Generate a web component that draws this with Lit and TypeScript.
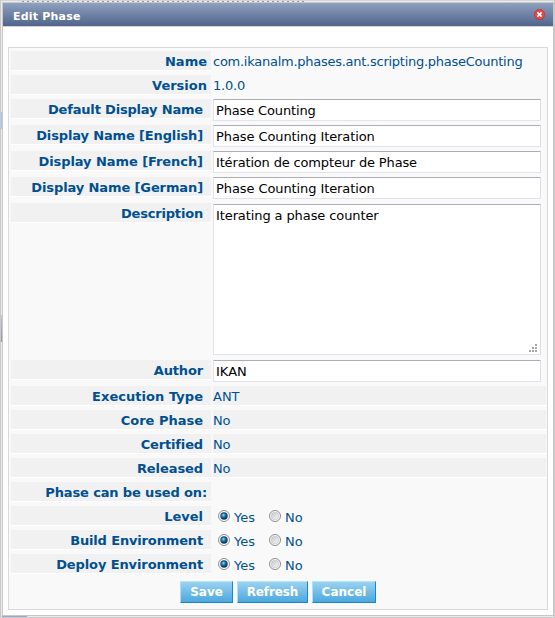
import { LitElement, html, css, svg, nothing } from "lit";
import { customElement, property } from "lit/decorators.js";

type Kind = "text" | "input" | "area" | "shaded" | "radio" | "heading";

interface Field {
  label: string;
  kind: Kind;
  value?: string;
  wide?: boolean;
  /** letter spacing of the label and of the value, px */
  ls?: number;
  vs?: number;
}

const FIELDS: Field[] = [
  { label: "Name", kind: "text", value: "com.ikanalm.phases.ant.scripting.phaseCounting", wide: true, vs: -0.26 },
  { label: "Version", kind: "text", value: "1.0.0", wide: true, vs: -0.2 },
  { label: "Default Display Name", kind: "input", value: "Phase Counting", ls: -0.18, vs: -0.14 },
  { label: "Display Name [English]", kind: "input", value: "Phase Counting Iteration", ls: -0.14, vs: -0.09 },
  { label: "Display Name [French]", kind: "input", value: "Itération de compteur de Phase", ls: -0.07, vs: -0.16 },
  { label: "Display Name [German]", kind: "input", value: "Phase Counting Iteration", ls: -0.11, vs: -0.09 },
  { label: "Description", kind: "area", value: "Iterating a phase counter", ls: -0.18, vs: -0.1 },
  { label: "Author", kind: "input", value: "IKAN", ls: -0.15 },
  { label: "Execution Type", kind: "shaded", value: "ANT", ls: 0.04 },
  { label: "Core Phase", kind: "shaded", value: "No", vs: -0.3 },
  { label: "Certified", kind: "shaded", value: "No", ls: -0.15, vs: -0.3 },
  { label: "Released", kind: "shaded", value: "No", ls: -0.08, vs: -0.3 },
  { label: "Phase can be used on:", kind: "heading", wide: true, ls: -0.14 },
  { label: "Level", kind: "radio" },
  { label: "Build Environment", kind: "radio", ls: -0.15 },
  { label: "Deploy Environment", kind: "radio", ls: -0.11 },
];

@customElement("radio-mark")
class RadioMark extends LitElement {
  @property({ type: Boolean }) on = false;
  static styles = css`
    :host { display: block; width: 12px; height: 12px; }
    svg { display: block; }
  `;
  render() {
    return html`<svg width="12" height="12" viewBox="0 0 12 12">
      <defs>
        <radialGradient id="blue" cx=".4" cy=".35" r=".65">
          <stop offset="0" stop-color="#8fe0fa" /><stop offset=".4" stop-color="#1f8fc4" /><stop offset="1" stop-color="#0b2f4e" />
        </radialGradient>
        <linearGradient id="grey" x1="0" y1="0" x2="1" y2="1">
          <stop offset="0" stop-color="#c2c6cb" /><stop offset="1" stop-color="#f8f8f8" />
        </linearGradient>
      </defs>
      <circle cx="6" cy="6" r="5.5" fill="#fbfbfb" stroke="#8b8d8f" />
      ${this.on
        ? svg`<circle cx="6" cy="6" r="3.7" fill="#173a56" /><circle cx="6" cy="6" r="3" fill="url(#blue)" />`
        : svg`<circle cx="6" cy="6" r="3.8" fill="url(#grey)" stroke="#c4c7cb" stroke-width=".7" />`}
    </svg>`;
  }
}

@customElement("form-row")
class FormRow extends LitElement {
  @property({ attribute: false }) field!: Field;
  static styles = css`
    :host { display: grid; grid-template-columns: 200px 1fr; column-gap: 2px; height: 24px; align-items: start; }
    :host([kind="input"]) { height: 26px; }
    :host([kind="area"]) { height: 157px; }
    .label {
      box-sizing: border-box; height: 20px; padding-right: 8px; text-align: right; font-weight: bold;
      line-height: 22px; background: #f1f1f1; border-bottom: 1px solid #fff; white-space: nowrap;
    }
    .wide { padding-right: 4px; }
    .value { height: 20px; line-height: 22px; box-sizing: border-box; white-space: nowrap; }
    .shaded { background: #f1f1f1; border-bottom: 1px solid #fff; }
    .box {
      box-sizing: border-box; width: 328px; height: 22px; margin: 0; padding: 0 2px; line-height: 22px;
      background: #fff; border: 1px solid #e2e3ea; border-top-color: #abadb3; border-right-color: #dbdfe6;
      border-radius: 1px; color: #000; white-space: nowrap;
    }
    .area { position: relative; height: 151px; margin-top: 1px; line-height: 21px; }
    .grip { position: absolute; right: 2px; bottom: 1px; }
    .radios { display: flex; height: 20px; padding-left: 5px; line-height: 24px; }
    .radios radio-mark { margin: 4px 4px 0 0; }
    .radios .yes { width: 35px; }
  `;
  private value() {
    const f = this.field;
    const spacing = `letter-spacing:${f.vs ?? 0}px`;
    switch (f.kind) {
      case "input":
        return html`<div class="box" style=${spacing}>${f.value}</div>`;
      case "area":
        return html`<div class="box area" style=${spacing}>${f.value}
          <svg class="grip" width="9" height="9" fill="#a3a3a3">
            <path d="M6 0h2v2h-2zM3 3h2v2h-2zM6 3h2v2h-2zM0 6h2v2h-2zM3 6h2v2h-2zM6 6h2v2h-2z" />
          </svg></div>`;
      case "shaded":
        return html`<div class="value shaded" style=${spacing}>${f.value}</div>`;
      case "radio":
        return html`<div class="radios">
          <radio-mark on></radio-mark><span class="yes">Yes</span>
          <radio-mark></radio-mark><span>No</span>
        </div>`;
      case "text":
        return html`<div class="value" style=${spacing}>${f.value}</div>`;
      default:
        return nothing;
    }
  }
  render() {
    const f = this.field;
    return html`<div class="label ${f.wide ? "wide" : ""}" style=${`letter-spacing:${f.ls ?? 0}px`}>${f.label}</div>${this.value()}`;
  }
}

@customElement("app-root")
class AppRoot extends LitElement {
  static styles = css`
    :host {
      display: block; box-sizing: border-box; width: 555px; height: 618px; padding: 2px 1px 2px 2px;
      overflow: hidden; color: #00508f;
      font: 13px "DejaVu Sans", Verdana, sans-serif;
      background:
        linear-gradient(#c9c9c9, #c9c9c9) 0 0 / 1px 100% no-repeat,
        linear-gradient(#c9c9c9, #c9c9c9) 100% 0 / 1px 100% no-repeat,
        linear-gradient(#c9c9c9, #c9c9c9) 0 100% / 100% 1px no-repeat,
        linear-gradient(#d4d4d4, #d4d4d4) 0 0 / 100% 1px no-repeat,
        repeating-linear-gradient(90deg, #8d9bb0 0 2px, #eee 2px 5px) 22px 1px / 284px 1px no-repeat,
        linear-gradient(#a9c4ec, #a9c4ec) 1px 112px / 1px 17px no-repeat,
        linear-gradient(#c3c7d2, #8f94a8) 1px 315px / 1px 27px no-repeat,
        linear-gradient(#9aaac4, #9aaac4) 2px 616px / 25px 1px no-repeat,
        #ebebeb;
    }
    .dialog {
      box-sizing: border-box; height: 614px; border: 1px solid #c9c9c9; background: #fff;
      display: flex; flex-direction: column;
    }
    .bar {
      box-sizing: border-box; height: 24px; flex: none; display: flex; align-items: center; justify-content: space-between;
      padding: 1px 8px 0 10px; color: #fff; font-weight: bold; font-size: 11px; letter-spacing: .2px;
      background: linear-gradient(#8fa0c0, #50658a); border-bottom: 1px solid #d2d2d2;
    }
    .bar span { padding-top: 2px; }
    .bar svg { display: block; margin-top: -1px; }
    .panel {
      box-sizing: border-box; height: 563px; margin: 20px 5px 0; padding: 3px 1px 0 2px;
      border: 1px solid #dadada; background: #f9f9f9;
    }
    .actions { display: flex; gap: 4px; padding: 3px 0 0 169px; }
    .button {
      box-sizing: border-box; height: 22px; line-height: 21px; text-align: center; font-weight: bold; color: #fff;
      font-size: 12px; border: 1px solid; border-color: #b3e6f8 #1b86cb #1b86cb #a5e3f7;
      background: linear-gradient(#9bd2f1, #4ba8de);
    }
    .save { width: 53px; }
    .refresh { width: 71px; letter-spacing: -.1px; }
    .cancel { width: 64px; }
  `;
  render() {
    return html`<div class="dialog">
      <div class="bar"><span>Edit Phase</span>
        <svg width="11" height="11" viewBox="0 0 11 11">
          <circle cx="5.5" cy="5.5" r="5.1" fill="#e64a46" stroke="#c92f30" stroke-width=".8" />
          <path d="M3.4 3.4l4.2 4.2M7.6 3.4l-4.2 4.2" stroke="#fff" stroke-width="1.6" />
        </svg>
      </div>
      <div class="panel">
        ${FIELDS.map((f) => html`<form-row kind=${f.kind} .field=${f}></form-row>`)}
        <div class="actions">
          <div class="button save">Save</div>
          <div class="button refresh">Refresh</div>
          <div class="button cancel">Cancel</div>
        </div>
      </div>
    </div>`;
  }
}
